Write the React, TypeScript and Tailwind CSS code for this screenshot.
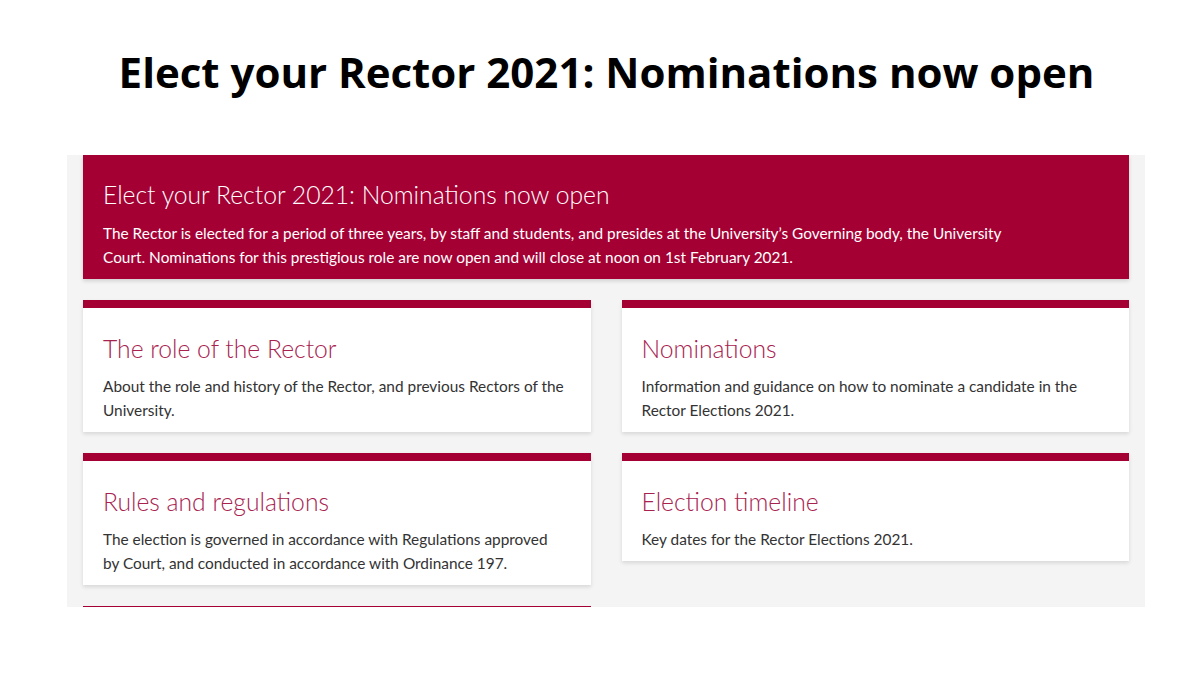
import React from 'react';

const cards = [
  {
    title: 'The role of the Rector',
    text: 'About the role and history of the Rector, and previous Rectors of the University.',
  },
  {
    title: 'Nominations',
    text: 'Information and guidance on how to nominate a candidate in the Rector Elections 2021.',
  },
  {
    title: 'Rules and regulations',
    text: 'The election is governed in accordance with Regulations approved by Court, and conducted in accordance with Ordinance 197.',
  },
  {
    title: 'Election timeline',
    text: 'Key dates for the Rector Elections 2021.',
  },
];

function Card({ title, text }: { title: string; text: string }) {
  return (
    <div className="bg-white shadow-[0_2px_4px_rgba(0,0,0,0.12)]">
      <div className="h-2 bg-[#a50034]" />
      <div className="pl-5 pr-[26px] pt-[24px] pb-[10px]">
        <h2 className="text-[24.7px] leading-[34px] font-light text-[#a8224f] mb-[8px]">{title}</h2>
        <p className="text-[15.4px] leading-6 text-[#333]">{text}</p>
      </div>
    </div>
  );
}

export default function App() {
  return (
    <main className="min-h-screen bg-white font-['Lato',sans-serif]">
      <h1 className="pt-[40px] pl-[13px] h-[155px] text-center text-[42px] font-bold text-black font-['Open_Sans',sans-serif]">
        Elect your Rector 2021: Nominations now open
      </h1>

      <section className="ml-[67px] w-[1078px] h-[452px] overflow-hidden bg-[#f4f4f4] px-4">
        <div className="bg-[#a50034] px-5 pt-[24px] pb-[10px] text-white shadow-[0_2px_4px_rgba(0,0,0,0.15)]">
          <h2 className="text-[24.7px] leading-[32px] font-light mb-[10px]">
            Elect your Rector 2021: Nominations now open
          </h2>
          <p className="text-[15.4px] leading-6 max-w-[920px]">
            The Rector is elected for a period of three years, by staff and students, and presides at the
            University’s Governing body, the University Court. Nominations for this prestigious role are now
            open and will close at noon on 1st February 2021.
          </p>
        </div>

        <div className="grid grid-cols-2 items-start gap-x-[31px] gap-y-[21px] mt-[21px]">
          {cards.map((c) => (
            <Card key={c.title} title={c.title} text={c.text} />
          ))}
          <div className="h-2 bg-[#a50034]" />
        </div>
      </section>
    </main>
  );
}
